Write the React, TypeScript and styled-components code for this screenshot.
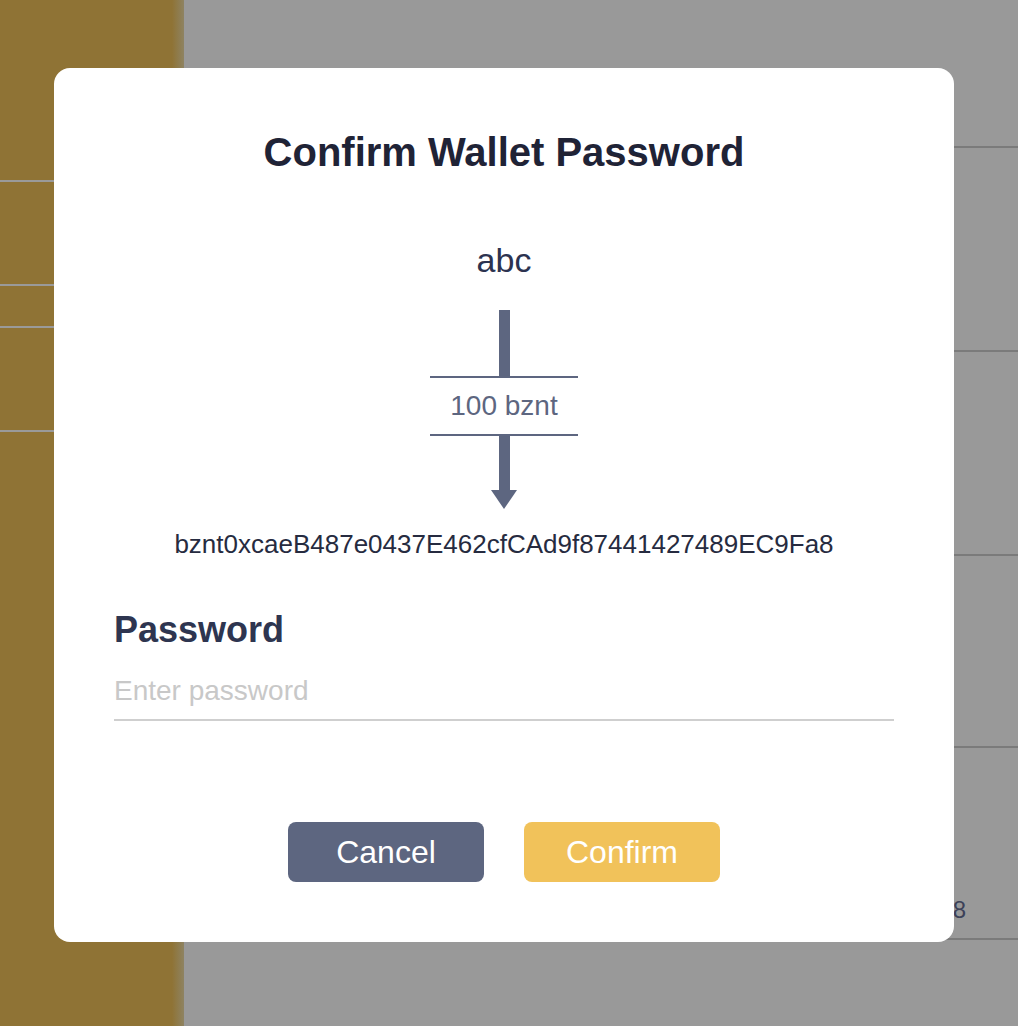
import styled, { createGlobalStyle } from "styled-components";

const GlobalStyle = createGlobalStyle`
  html, body {
    margin: 0;
    padding: 0;
    background: #999999;
    font-family: "Liberation Sans", Arial, sans-serif;
  }
`;

const sideItems = [180, 102, 40, 102];
const tableRows = [204, 204, 192, 192];

const Page = styled.div`
  display: grid;
  grid-template-columns: 184px 1fr;
  min-height: 1026px;
`;

const Sidebar = styled.aside`
  background: linear-gradient(to right, #8f7335 172px, #8e8362 184px);
  display: flex;
  flex-direction: column;
`;

const SideItem = styled.div<{ $h: number }>`
  height: ${(p) => p.$h}px;
  border-bottom: 2px solid #9a9a9a;
`;

const Main = styled.main`
  display: flex;
  flex-direction: column;
`;

const TableHead = styled.div`
  height: 146px;
  border-bottom: 2px solid #7b7b7b;
`;

const TableRow = styled.div<{ $h: number }>`
  height: ${(p) => p.$h}px;
  border-bottom: 2px solid #7b7b7b;
  display: flex;
  align-items: flex-end;
  justify-content: flex-end;
  padding: 0 52px 14px 0;
  box-sizing: border-box;
  color: #3c4158;
  font-size: 24px;
`;

const Overlay = styled.div`
  position: fixed;
  inset: 0;
  padding: 68px 0 0 54px;
`;

const Modal = styled.div`
  width: 900px;
  box-sizing: border-box;
  background: #ffffff;
  border-radius: 16px;
  padding: 60px 60px 60px;
  display: flex;
  flex-direction: column;
  align-items: center;
`;

const Title = styled.h2`
  margin: 0;
  font-size: 40px;
  line-height: 48px;
  font-weight: 700;
  color: #1f2336;
`;

const From = styled.div`
  margin-top: 64px;
  font-size: 34px;
  line-height: 40px;
  color: #2c3350;
`;

const Flow = styled.div`
  margin-top: 30px;
  display: flex;
  flex-direction: column;
  align-items: center;
`;

const Shaft = styled.div<{ $h: number }>`
  width: 11px;
  height: ${(p) => p.$h}px;
  background: #5d6680;
`;

const Head = styled.div`
  width: 0;
  height: 0;
  border-left: 13px solid transparent;
  border-right: 13px solid transparent;
  border-top: 19px solid #5d6680;
`;

const Amount = styled.div`
  width: 148px;
  border-top: 2px solid #5d6680;
  border-bottom: 2px solid #5d6680;
  text-align: center;
  font-size: 28px;
  line-height: 56px;
  color: #5d6680;
`;

const Address = styled.div`
  margin-top: 19px;
  font-size: 26px;
  line-height: 32px;
  color: #262b40;
`;

const Field = styled.label`
  align-self: stretch;
  margin-top: 49px;
  display: flex;
  flex-direction: column;
`;

const FieldLabel = styled.span`
  font-size: 36px;
  line-height: 42px;
  font-weight: 700;
  color: #2e3550;
`;

const Input = styled.input`
  margin-top: 11px;
  height: 59px;
  box-sizing: border-box;
  border: none;
  border-bottom: 2px solid #cfcfcf;
  padding: 0;
  outline: none;
  font-family: inherit;
  font-size: 28px;
  color: #2e3550;
  background: transparent;

  &::placeholder {
    color: #c8c8c8;
  }
`;

const Actions = styled.div`
  margin-top: 101px;
  display: flex;
  gap: 40px;
`;

const Button = styled.button<{ $primary?: boolean }>`
  width: 196px;
  height: 60px;
  border: none;
  border-radius: 8px;
  background: ${(p) => (p.$primary ? "#f1c25a" : "#5d6680")};
  color: #ffffff;
  font-family: inherit;
  font-size: 32px;
  cursor: pointer;
`;

export default function App() {
  return (
    <>
      <GlobalStyle />
      <Page>
        <Sidebar>
          {sideItems.map((h, i) => (
            <SideItem key={i} $h={h} />
          ))}
        </Sidebar>
        <Main>
          <TableHead />
          {tableRows.map((h, i) => (
            <TableRow key={i} $h={h}>
              {i === tableRows.length - 1 ? "1.28" : ""}
            </TableRow>
          ))}
        </Main>
      </Page>
      <Overlay>
        <Modal>
          <Title>Confirm Wallet Password</Title>
          <From>abc</From>
          <Flow>
            <Shaft $h={66} />
            <Amount>100 bznt</Amount>
            <Shaft $h={54} />
            <Head />
          </Flow>
          <Address>bznt0xcaeB487e0437E462cfCAd9f87441427489EC9Fa8</Address>
          <Field>
            <FieldLabel>Password</FieldLabel>
            <Input type="password" placeholder="Enter password" />
          </Field>
          <Actions>
            <Button>Cancel</Button>
            <Button $primary>Confirm</Button>
          </Actions>
        </Modal>
      </Overlay>
    </>
  );
}
